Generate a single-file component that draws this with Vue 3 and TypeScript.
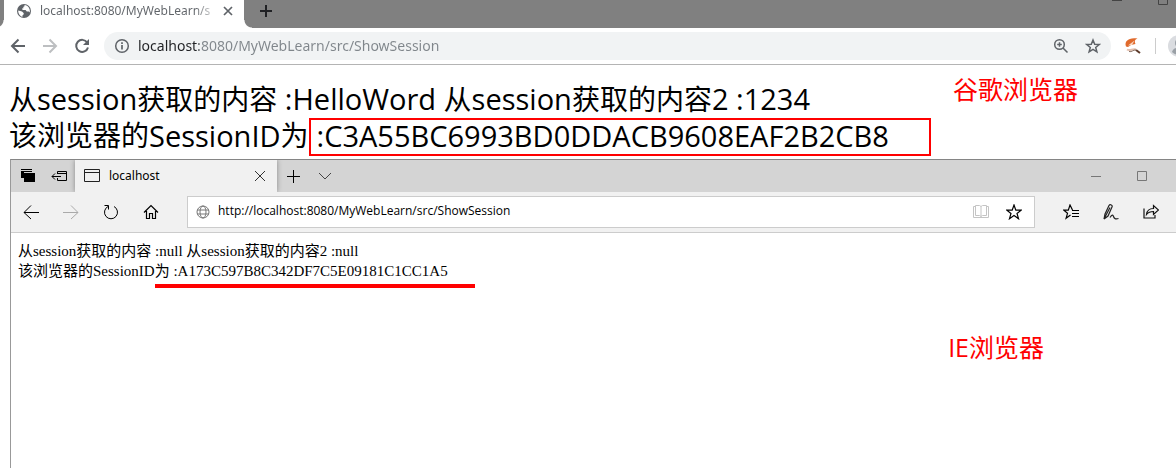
<script setup lang="ts">
import { ref } from 'vue'

interface Part {
  text: string
  latin: boolean
}

const chromeUrl = ref('localhost:8080/MyWebLearn/src/ShowSession')
const edgeUrl = ref('http://localhost:8080/MyWebLearn/src/ShowSession')

const split = (line: string): Part[] =>
  (line.match(/[\u4e00-\u9fff]+|[^\u4e00-\u9fff]+/g) ?? []).map((text) => ({
    text,
    latin: !/[\u4e00-\u9fff]/.test(text),
  }))

const chromeFirst = split('从session获取的内容 :HelloWord 从session获取的内容2 :1234')
const idLabel = split('该浏览器的SessionID为')
const edgeFirst = '从session获取的内容 :null 从session获取的内容2 :null'
</script>

<template>
  <main class="page">
    <section class="chrome">
      <div class="strip">
        <div class="tab">
          <svg class="globe" width="16" height="16" viewBox="0 0 16 16">
            <circle cx="8" cy="8" r="7" fill="#5f6368" />
            <path d="M2.2 7.6 6 8.4l1.8 1.8-.4 1.6-1 .8v1.3C3.9 13.300 2 10.500 2.200 7.600ZM8.500 2v1.200l-1.300.8.3 1.200-1.500.4.6 1.300h3l1.200 1.700h2l1 .8C14.500 6 12.200 2.300 8.500 2Z" fill="#fff" />
          </svg>
          <span class="tab-title">localhost:8080/MyWebLearn/s</span>
          <button class="icon" aria-label="Close tab">
            <svg width="10" height="10" viewBox="0 0 10 10"><path d="m1 1 8 8M9 1 1 9" stroke="#5f6368" stroke-width="1.700" /></svg>
          </button>
        </div>
        <button class="icon new-tab" aria-label="New tab">
          <svg width="14" height="14" viewBox="0 0 14 14"><path d="M7 1v12M1 7h12" stroke="#202124" stroke-width="2" /></svg>
        </button>
        <div class="window-buttons">
          <button class="icon" aria-label="Minimize"><svg width="12" height="12" viewBox="0 0 12 12"><path d="M1 6.500h10" stroke="#444" /></svg></button>
          <button class="icon" aria-label="Maximize"><svg width="12" height="12" viewBox="0 0 12 12"><path d="M1.500 1.500h9v9h-9z" fill="none" stroke="#444" /></svg></button>
        </div>
      </div>
      <div class="toolbar">
        <nav class="chrome-nav">
          <button class="icon" aria-label="Back"><svg width="16" height="16" viewBox="0 0 16 16"><path d="M15 8H2M8.500 1.500 2 8l6.500 6.500" fill="none" stroke="#5f6368" stroke-width="2" /></svg></button>
          <button class="icon" aria-label="Forward"><svg width="16" height="16" viewBox="0 0 16 16"><path d="M1 8h13M7.500 1.500 14 8l-6.500 6.500" fill="none" stroke="#bdbfc1" stroke-width="2" /></svg></button>
          <button class="icon" aria-label="Reload"><svg width="16" height="16" viewBox="0 0 16 16"><path d="M13.200 4.500A6 6 0 1 0 14 9.500" fill="none" stroke="#5f6368" stroke-width="2" /><path d="M15 1v6H9z" fill="#5f6368" /></svg></button>
        </nav>
        <div class="omnibox">
          <svg width="16" height="16" viewBox="0 0 16 16"><circle cx="8" cy="8" r="6.300" fill="none" stroke="#5f6368" stroke-width="1.500" /><path d="M8 7v4.500M8 4.200V6" stroke="#5f6368" stroke-width="1.700" /></svg>
          <input v-model="chromeUrl" class="chrome-url" aria-label="Address" />
          <button class="icon" aria-label="Zoom"><svg width="16" height="16" viewBox="0 0 16 16"><circle cx="6.500" cy="6.500" r="4.800" fill="none" stroke="#5f6368" stroke-width="1.500" /><path d="m10 10 4.500 4.500M6.500 4.200v4.600M4.200 6.500h4.600" stroke="#5f6368" stroke-width="1.500" /></svg></button>
          <button class="icon star" aria-label="Bookmark"><svg width="16" height="16" viewBox="0 0 16 16"><path d="m8 2 1.700 4.200 4.500.3-3.500 2.900 1.200 4.400L8 11.400l-3.900 2.400 1.200-4.400-3.500-2.900 4.500-.3z" fill="none" stroke="#5f6368" stroke-width="1.500" /></svg></button>
        </div>
        <button class="icon extension" aria-label="Extension">
          <svg width="18" height="18" viewBox="0 0 18 18"><path d="M2 9.500C0 4 5 0 13.500 1.500c-3 1-3 3-2 5.500L7 8l-3 2z" fill="#e06a2c" /><path d="m4 8.500 6.500-5L8 8z" fill="#f8d5c0" /><path d="M3 12.500c3 2 5-1 9 0" fill="none" stroke="#e2bfae" stroke-width="2" /><path d="M5 14.500c3 1 4-2 7-1.500" fill="none" stroke="#8a7468" /><path d="m12 13 4 3" stroke="#5c3a2a" stroke-width="2" /></svg>
        </button>
        <span class="divider"></span>
        <button class="avatar" aria-label="Profile">
          <svg width="22" height="22" viewBox="0 0 22 22"><circle cx="11" cy="11" r="11" fill="#dadce0" /><circle cx="11" cy="8" r="4" fill="#9aa0a6" /><path d="M4 17c1-6 13-6 14 0-4 4-10 4-14 0" fill="#9aa0a6" /></svg>
        </button>
      </div>
      <article class="chrome-body">
        <p><span v-for="(part, i) in chromeFirst" :key="i" :class="{ latin: part.latin }">{{ part.text }}</span></p>
        <p class="id-row"><span v-for="(part, i) in idLabel" :key="i" :class="{ latin: part.latin }">{{ part.text }}</span><span class="boxed latin">:C3A55BC6993BD0DDACB9608EAF2B2CB8</span></p>
        <span class="note chrome-note">谷歌浏览器</span>
      </article>
    </section>

    <section class="edge">
      <div class="edge-strip">
        <div class="edge-tools">
          <button class="icon" aria-label="Tabs set aside"><svg width="16" height="16" viewBox="0 0 16 16"><path d="M1 1h11v3h-8v6H1zM4 5h11v9H4z" fill="#000" /><path d="M1 2.500h11" stroke="#d4d4d4" /></svg></button>
          <button class="icon" aria-label="Set tabs aside"><svg width="17" height="16" viewBox="0 0 17 16"><path d="M6.500 6V3.500h9v9h-9V10M6.500 5.500h9M1 8.500h9M4 5.500l-3 3 3 3" fill="none" stroke="#000" /></svg></button>
        </div>
        <div class="edge-tab">
          <svg width="16" height="14" viewBox="0 0 16 14"><path d="M.5.5h15v12H.5zM.500 3.500h15" fill="none" stroke="#222" /></svg>
          <span class="edge-title">localhost</span>
          <button class="icon" aria-label="Close tab"><svg width="12" height="12" viewBox="0 0 12 12"><path d="m1 1 10 10M11 1 1 11" stroke="#333" /></svg></button>
        </div>
        <button class="icon edge-new" aria-label="New tab"><svg width="14" height="14" viewBox="0 0 14 14"><path d="M7.500 1v13M1 7.500h13" stroke="#000" /></svg></button>
        <button class="icon edge-more" aria-label="Tab previews"><svg width="14" height="8" viewBox="0 0 14 8"><path d="m1 1 6 6 6-6" fill="none" stroke="#444" /></svg></button>
        <div class="edge-window">
          <button class="icon" aria-label="Minimize"><svg width="10" height="10" viewBox="0 0 10 10"><path d="M0 5.500h10" stroke="#777" /></svg></button>
          <button class="icon" aria-label="Maximize"><svg width="10" height="10" viewBox="0 0 10 10"><path d="M.5.5h9v9h-9z" fill="none" stroke="#777" /></svg></button>
        </div>
      </div>
      <div class="edge-bar">
        <nav class="edge-nav">
          <button class="icon" aria-label="Back"><svg width="16" height="16" viewBox="0 0 16 16"><path d="M16 8.500H1M8 1.500l-7 7 7 6.500" fill="none" stroke="#000" /></svg></button>
          <button class="icon" aria-label="Forward"><svg width="16" height="16" viewBox="0 0 16 16"><path d="M0 8.500h15M8 1.500l7 7L8 15" fill="none" stroke="#aaa" /></svg></button>
          <button class="icon" aria-label="Refresh"><svg width="16" height="16" viewBox="0 0 16 16"><path d="M5 2.500A6.500 6.500 0 1 0 11 2.500M1.500 1.500H5.500V5.500" fill="none" stroke="#000" /></svg></button>
          <button class="icon" aria-label="Home"><svg width="16" height="16" viewBox="0 0 16 16"><path d="M1 8.500 8 1.500l7 7M3.500 7v7.500h3V9.500h3v5h3V7" fill="none" stroke="#000" stroke-width="1.200" /></svg></button>
        </nav>
        <div class="edge-address">
          <svg width="14" height="14" viewBox="0 0 14 14"><g fill="none" stroke="#777"><circle cx="7" cy="7" r="6" /><ellipse cx="7" cy="7" rx="3" ry="6" /><path d="M1 5h12M1 9h12" /></g></svg>
          <input v-model="edgeUrl" class="edge-url" aria-label="Edge address" />
          <button class="icon" aria-label="Reading view"><svg width="16" height="16" viewBox="0 0 16 16"><path d="M2.500 1.500h4L8 2.500l1.500-1h4v10h-4L8 12.500l-1.500-1h-4zM8 2.500v10M2.500 2.500h-2v11h15v-11h-2" fill="none" stroke="#c4c4c4" /></svg></button>
          <button class="icon edge-fav" aria-label="Add to favorites"><svg width="16" height="16" viewBox="0 0 16 16"><path d="m8 1 1.800 5.200h5.400L11 9.500l1.500 5.200L8 11.500l-4.500 3.200L5 9.500.8 6.200h5.400z" fill="none" stroke="#000" stroke-width="1.200" /></svg></button>
        </div>
        <div class="edge-actions">
          <button class="icon" aria-label="Favorites"><svg width="16" height="16" viewBox="0 0 16 16"><path d="M9.500 6 7 1 5.300 6.200H.8l3.700 3.100-1.400 5L7.500 11M9 6.500h7M9 9.500h7M9 12.500h7" fill="none" stroke="#000" stroke-width="1.200" /></svg></button>
          <button class="icon" aria-label="Add notes"><svg width="16" height="16" viewBox="0 0 16 16"><path d="M1 15 2 10 6 1.500c1-1.500 4-.5 3 1.500L5 12l-4 3L7 3.500M7 13.500c2-3 3-3 3.500-1s2 3 5 2" fill="none" stroke="#222" stroke-width="1.200" /></svg></button>
          <button class="icon" aria-label="Share"><svg width="16" height="16" viewBox="0 0 16 16"><path d="M1 4.500v9.500h11V11M3.500 10.500c.5-4 3-6 7-6V1.500l5 4.500-5 4.500V7.500c-3 0-5 .5-7 3z" fill="none" stroke="#111" stroke-width="1.200" /></svg></button>
        </div>
      </div>
      <article class="edge-body">
        <p>{{ edgeFirst }}</p>
        <p>该浏览器的SessionID<span class="underlined">为 :A173C597B8C342DF7C5E09181C1CC1A5</span></p>
        <span class="note edge-note">IE浏览器</span>
      </article>
    </section>
  </main>
</template>

<style>
body {
  overflow: hidden;
  background: #fff;
}
</style>

<style scoped>
.page {
  display: flex;
  flex-direction: column;
  min-height: 100vh;
  font-family: "Open Sans", "Noto Sans CJK SC", sans-serif;
  color: #000;
}
p {
  margin: 0;
  white-space: nowrap;
}
svg {
  display: block;
  flex: none;
}
.icon,
.avatar {
  display: flex;
  align-items: center;
  justify-content: center;
  flex: none;
  padding: 0;
  border: 0;
  background: none;
}
input {
  flex: 1;
  min-width: 0;
  padding: 0;
  border: 0;
  outline: 0;
  background: none;
  font-family: inherit;
}
.strip {
  display: flex;
  height: 28px;
  background: radial-gradient(circle at 0 0, transparent 0) #808080;
}
.tab {
  position: relative;
  display: flex;
  align-items: center;
  box-sizing: border-box;
  width: 240px;
  margin-left: 4px;
  padding: 0 11px 6px 12px;
  background: #fff;
}
.tab::before,
.tab::after {
  content: "";
  position: absolute;
  bottom: 0;
  width: 8px;
  height: 8px;
}
.tab::before {
  right: 100%;
  background: radial-gradient(circle at 0 0, #808080 7px, #fff 8px);
}
.tab::after {
  left: 100%;
  background: radial-gradient(circle at 100% 0, #808080 7px, #fff 8px);
}
.tab-title {
  flex: 1;
  margin: 0 9px 0 8px;
  white-space: nowrap;
  font-family: "Noto Sans", sans-serif;
  font-size: 12px;
  line-height: 20px;
  color: transparent;
  background: linear-gradient(to right, #5f6368 154px, #e8e8e8 176px);
  background-clip: text;
}
.new-tab {
  margin-left: 15px;
  padding-bottom: 6px;
}
.window-buttons {
  display: flex;
  align-items: flex-start;
  gap: 34px;
  margin: -6px 7px 0 auto;
}
.toolbar {
  display: flex;
  align-items: center;
  height: 36px;
  padding-left: 10px;
  border-bottom: 1px solid #b4b4b4;
  overflow: hidden;
}
.chrome-nav {
  display: flex;
  gap: 16px;
}
.omnibox {
  display: flex;
  align-items: center;
  flex: 1;
  height: 28px;
  margin-left: 14px;
  padding: 0 10px;
  border-radius: 14px;
  background: #f1f3f4;
}
.chrome-url {
  height: 22px;
  margin: 0 0 2px 8px;
  font-family: "Noto Sans", sans-serif;
  font-size: 14px;
  color: transparent;
  background: linear-gradient(to right, #202124 61px, #80868b 61px);
  background-clip: text;
}
.star {
  margin-left: 16px;
}
.extension {
  margin-left: 13px;
}
.divider {
  width: 1px;
  height: 16px;
  margin: 0 12px 0 13px;
  background: #ccc;
}
.avatar {
  margin-right: -14px;
}
.chrome-body {
  position: relative;
  padding: 15px 0 4px 9px;
  font-size: 28px;
  line-height: 37px;
}
.latin {
  font-size: 29px;
}
.chrome-body p {
  height: 37px;
}
.chrome-body .id-row {
  display: flex;
  height: 38px;
}
.boxed {
  box-sizing: border-box;
  width: 622px;
  height: 38px;
  margin-top: 1px;
  padding-left: 6px;
  border: 2px solid #f00;
  line-height: 32px;
}
.note {
  position: absolute;
  font-size: 25px;
  line-height: 36px;
  color: #f00;
}
.chrome-note {
  top: 6px;
  right: 98px;
}
.edge {
  display: flex;
  flex: 1;
  flex-direction: column;
  margin-left: 10px;
  border-top: 1px solid #858585;
  border-left: 1px solid #999;
}
.edge-strip {
  display: flex;
  height: 32px;
  background: #d4d4d4;
}
.edge-tools {
  display: flex;
  gap: 15px;
  padding: 0 7px 0 9px;
}
.edge-tab {
  display: flex;
  align-items: center;
  box-sizing: border-box;
  width: 202px;
  padding: 0 11px 0 9px;
  background: #f1f1f1;
  box-shadow: 0 0 5px #888;
  clip-path: inset(0 -6px 0 -6px);
}
.edge-title {
  flex: 1;
  margin-left: 9px;
  padding-bottom: 2px;
  font-family: "Noto Sans", sans-serif;
  font-size: 12px;
}
.edge-new {
  margin-left: 9px;
}
.edge-more {
  margin-left: 18px;
}
.edge-window {
  display: flex;
  gap: 36px;
  margin: 0 29px 0 auto;
}
.edge-bar {
  display: flex;
  align-items: center;
  height: 40px;
  border-bottom: 1px solid #ccc;
  background: #f1f1f1;
}
.edge-nav {
  display: flex;
  gap: 24px;
  padding: 0 28px 0 12px;
}
.edge-address {
  display: flex;
  align-items: center;
  flex: 1;
  box-sizing: border-box;
  height: 32px;
  padding: 0 12px 0 8px;
  border: 1px solid #ccc;
  background: #fff;
}
.edge-url {
  height: 22px;
  margin: 0 8px 4px;
  font-size: 12px;
}
.edge-fav {
  margin-left: 17px;
}
.edge-actions {
  display: flex;
  gap: 24px;
  padding: 0 17px 0 28px;
}
.edge-body {
  position: relative;
  flex: 1;
  padding: 8px 0 0 7px;
  font-family: "Liberation Serif", "Noto Sans CJK SC", serif;
  font-size: 15px;
  line-height: 20px;
}
.underlined {
  display: inline-block;
  box-sizing: border-box;
  width: 320px;
  border-bottom: 4px solid #f00;
  padding-bottom: 3px;
}
.edge-note {
  top: 96px;
  right: 132px;
  font-family: "Open Sans", "Noto Sans CJK SC", sans-serif;
}
</style>
